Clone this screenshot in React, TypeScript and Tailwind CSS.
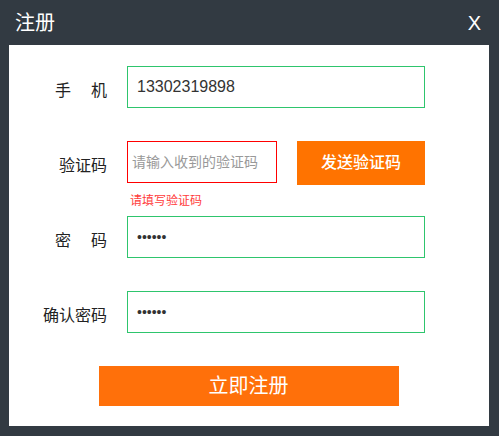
const FONT = "font-['Liberation_Sans','Noto_Sans_CJK_SC',sans-serif]"

function Label({ text, spread, top = "mt-[8px]" }: { text: string; spread?: boolean; top?: string }) {
  return (
    <div className={`w-[98px] shrink-0 flex justify-end ${top}`}>
      {spread ? (
        <span className="w-[52px] flex justify-between text-[16px] text-[#222]">
          {text.split("").map((c) => (
            <span key={c}>{c}</span>
          ))}
        </span>
      ) : (
        <span className="text-[16px] text-[#222]">{text}</span>
      )}
    </div>
  )
}

export default function App() {
  return (
    <div className={`${FONT} w-[499px] h-[436px] bg-[#323a42] flex flex-col`}>
      {/* Header */}
      <div className="h-[45px] flex items-center justify-between pl-[15px] pr-[18px]">
        <span className="text-white text-[20px]">注册</span>
        <span className="text-white text-[20px]">X</span>
      </div>

      {/* Body */}
      <div className="ml-[9px] mr-[10px] bg-white flex flex-col pt-[21px] pb-[20px]">
        <div className="flex items-center">
          <Label text="手机" spread />
          <div className="ml-[20px] w-[298px] h-[42px] border border-[#2ec56d] flex items-center px-[9px] text-[16px] text-[#333]">
            13302319898
          </div>
        </div>

        <div className="flex items-start mt-[33px]">
          <Label text="验证码" top="mt-[13px]" />
          <div className="ml-[20px] w-[150px] h-[42px] border border-[#ff0000] flex items-center px-[4px] text-[14px] text-[#999]">
            请输入收到的验证码
          </div>
          <button className="ml-[20px] w-[128px] h-[44px] bg-[#ff7300] text-white text-[16px] font-medium">
            发送验证码
          </button>
        </div>

        <div className="h-[25px] pt-[7px] pl-[121px] text-[12px] text-[#ff3b3b]">
          请填写验证码
        </div>

        <div className="flex items-center mt-[6px]">
          <Label text="密码" spread />
          <div className="ml-[20px] w-[298px] h-[42px] border border-[#2ec56d] flex items-center px-[9px] text-[14px] text-[#333]">
            ••••••
          </div>
        </div>

        <div className="flex items-center mt-[33px]">
          <Label text="确认密码" />
          <div className="ml-[20px] w-[298px] h-[42px] border border-[#2ec56d] flex items-center px-[9px] text-[14px] text-[#333]">
            ••••••
          </div>
        </div>

        <div className="flex justify-center mt-[33px]">
          <button className="ml-[-1px] w-[300px] h-[40px] bg-[#ff700a] text-white text-[20px]">
            立即注册
          </button>
        </div>
      </div>
    </div>
  )
}
